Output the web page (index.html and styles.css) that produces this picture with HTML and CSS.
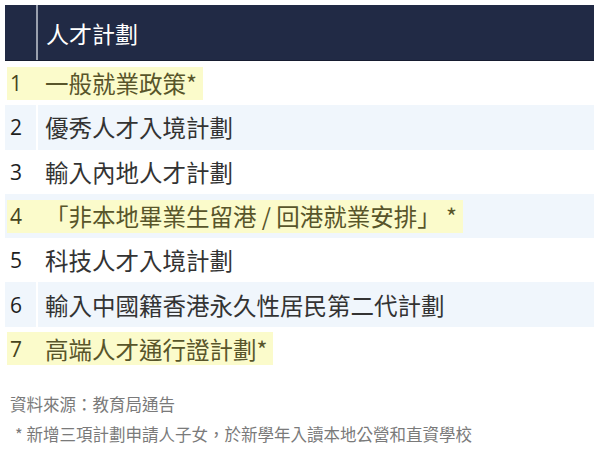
FILE: index.html
```html
<!DOCTYPE html>
<html lang="zh-Hant">
<head>
<meta charset="utf-8">
<link rel="stylesheet" href="styles.css">
</head>
<body>
<div class="page">
  <div class="table">
    <div class="head"><div class="num"></div><div class="txt">人才計劃</div></div>
    <div class="row"><span class="hl"><span class="num">1</span><span class="txt">一般就業政策*</span></span></div>
    <div class="row even"><span class="num">2</span><span class="txt">優秀人才入境計劃</span></div>
    <div class="row"><span class="num">3</span><span class="txt">輸入內地人才計劃</span></div>
    <div class="row even"><span class="hl"><span class="num">4</span><span class="txt">「非本地畢業生留港 / 回港就業安排」 *</span></span></div>
    <div class="row"><span class="num">5</span><span class="txt">科技人才入境計劃</span></div>
    <div class="row even"><span class="num">6</span><span class="txt">輸入中國籍香港永久性居民第二代計劃</span></div>
    <div class="row"><span class="hl"><span class="num">7</span><span class="txt">高端人才通行證計劃*</span></span></div>
  </div>
  <div class="notes">
    <p class="note">資料來源：教育局通告</p>
    <p class="note star">* 新增三項計劃申請人子女，於新學年入讀本地公營和直資學校</p>
  </div>
</div>
</body>
</html>
```

FILE: styles.css
```css
html, body {
  margin: 0;
  padding: 0;
  background: #ffffff;
}

.page {
  padding: 5px 0 0 5px;
  width: 589px;
  font-family: "Noto Sans CJK TC", "Noto Sans", sans-serif;
}

.table {
  display: flex;
  flex-direction: column;
}

.head {
  display: flex;
  height: 56px;
  background: #212a45;
  border-bottom: 1px solid #161c30;
  box-sizing: border-box;
}

.head .num {
  width: 33px;
  border-right: 2px solid #9aa0ae;
}

.head .txt {
  display: flex;
  align-items: center;
  padding-left: 8px;
  color: #ffffff;
  font-size: 23px;
  font-weight: 400;
}

.row {
  display: flex;
  align-items: center;
  height: 44.3px;
}

.row.even {
  background: #f0f6fc;
}

.num {
  box-sizing: border-box;
  width: 33px;
  padding-left: 5px;
  font-family: "Open Sans", "Noto Sans", sans-serif;
  font-size: 21px;
  font-weight: 500;
  color: #1e1e1e;
  border-right: 2px solid transparent;
  align-self: stretch;
  display: flex;
  align-items: center;
}

.row.even > .num {
  border-right-color: #ffffff;
}

.txt {
  padding-left: 7px;
  font-size: 23.5px;
  color: #333333;
  white-space: nowrap;
}

.hl {
  display: flex;
  align-items: center;
  height: 33px;
  margin-left: 2px;
  padding-right: 6px;
  background: #fbfbcb;
}

.hl .num {
  width: 31px;
  padding-left: 3px;
  color: #46441c;
}

.hl .txt {
  color: #58552a;
}

.notes {
  padding-top: 22px;
  display: flex;
  flex-direction: column;
  gap: 8px;
}

.note {
  margin: 0;
  padding-left: 5px;
  font-size: 16.5px;
  line-height: 22px;
  color: #7a7a7a;
}

.note.star {
  padding-left: 10px;
}
```
